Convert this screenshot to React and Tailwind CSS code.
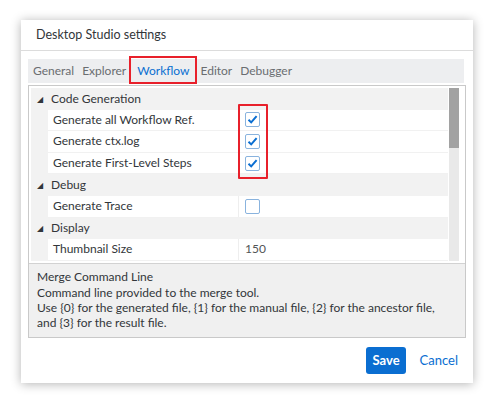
import React from "react";

const tabs = ["General", "Explorer", "Workflow", "Editor", "Debugger"];

const groups = [
  {
    name: "Code Generation",
    items: [
      { label: "Generate all Workflow Ref.", checked: true },
      { label: "Generate ctx.log", checked: true },
      { label: "Generate First-Level Steps", checked: true },
    ],
  },
  { name: "Debug", items: [{ label: "Generate Trace", checked: false }] },
  { name: "Display", items: [{ label: "Thumbnail Size", text: "150" }] },
];

const usage = "Use {0} for the generated file, {1} for the manual file, {2} for the ancestor file, and {3} for the result file.";

function CheckBox({ checked }) {
  return (
    <div className="w-[15px] h-[15px] border border-[#89b3de] rounded-[2px] bg-white flex items-center justify-center">
      {checked && (
        <svg width="11" height="11" viewBox="0 0 11 11">
          <path d="M1.5 5.8 L4.2 8.4 L9.6 2.2" fill="none" stroke="#0a6ed1" strokeWidth="2" />
        </svg>
      )}
    </div>
  );
}

export default function App() {
  return (
    <div className="w-[494px] h-[404px] bg-white pt-[20px] pl-[21px] font-['Lato','Open_Sans',sans-serif] text-[#32363a]">
      <div className="w-[452px] h-[363px] bg-white flex flex-col shadow-[0_1px_10px_rgba(0,0,0,0.3)]">
        <div className="h-[31px] flex items-center px-[15px] border-b border-[#dcdcdc] text-[12.5px]">
          Desktop Studio settings
        </div>

        <div className="flex flex-col px-[7px] pt-[8px]">
          {/* tabs */}
          <div className="h-[24px] bg-[#edeef0] flex items-center pl-[5px] gap-[8px] text-[12px] text-[#6a6d70] mr-[2px]">
            {tabs.map((t) => (
              <div key={t} className={"relative " + (t === "Workflow" ? "text-[#0a6ed1] px-[3px]" : "")}>
                {t}
                {t === "Workflow" && (
                  <div className="absolute left-[-5px] right-[-5px] top-[-6px] bottom-[-4px] border-[2px] border-[#e8202b]" />
                )}
              </div>
            ))}
          </div>

          {/* property grid */}
          <div className="mt-[2px] h-[253px] border border-[#c9c9c9] flex flex-col">
            <div className="flex-1 flex p-[2px] pr-[6px] border-b border-[#d2d2d2]">
              <div className="flex-1 flex flex-col text-[12px] bg-[#f2f2f2] relative">
                {groups.map((g) => (
                  <React.Fragment key={g.name}>
                    <div className="h-[21.6px] flex items-center">
                      <div className="w-[17px] flex justify-center text-[8px] text-[#32363a]">◢</div>
                      <div className="pl-[3px]">{g.name}</div>
                    </div>
                    {g.items.map((it) => (
                      <div key={it.label} className="h-[21.6px] flex ml-[17px] bg-white border-b border-[#f1f1f1]">
                        <div className="w-[191px] flex items-center pl-[5px] border-r border-[#eeeeee]">{it.label}</div>
                        <div className="flex items-center pl-[6px]">
                          {it.text ? <span className="text-[#515456]">{it.text}</span> : <CheckBox checked={it.checked} />}
                        </div>
                      </div>
                    ))}
                  </React.Fragment>
                ))}
                <div className="absolute left-[207px] top-[16px] w-[30px] h-[75px] border-[2px] border-[#e8202b] rounded-[1px]" />
              </div>
              <div className="w-[10px] bg-[#e9e9e9] ml-[1px] flex flex-col">
                <div className="h-[60px] bg-[#a2a2a2]" />
              </div>
            </div>
            <div className="h-[76px] bg-[#f0f0f0] px-[8px] pt-[5px] text-[12px] leading-[15px] text-[#32363a]">
              <p className="mb-[1px]">Merge Command Line</p>
              <p>Command line provided to the merge tool.</p>
              <p>{usage}</p>
            </div>
          </div>
        </div>

        <div className="flex-1 flex items-center justify-end pr-[15px] gap-[14px] text-[13px]">
          <button className="h-[27px] px-[6px] bg-[#0a6ed1] text-white rounded-[3px] font-bold">Save</button>
          <button className="text-[#0a6ed1]">Cancel</button>
        </div>
      </div>
    </div>
  );
}
